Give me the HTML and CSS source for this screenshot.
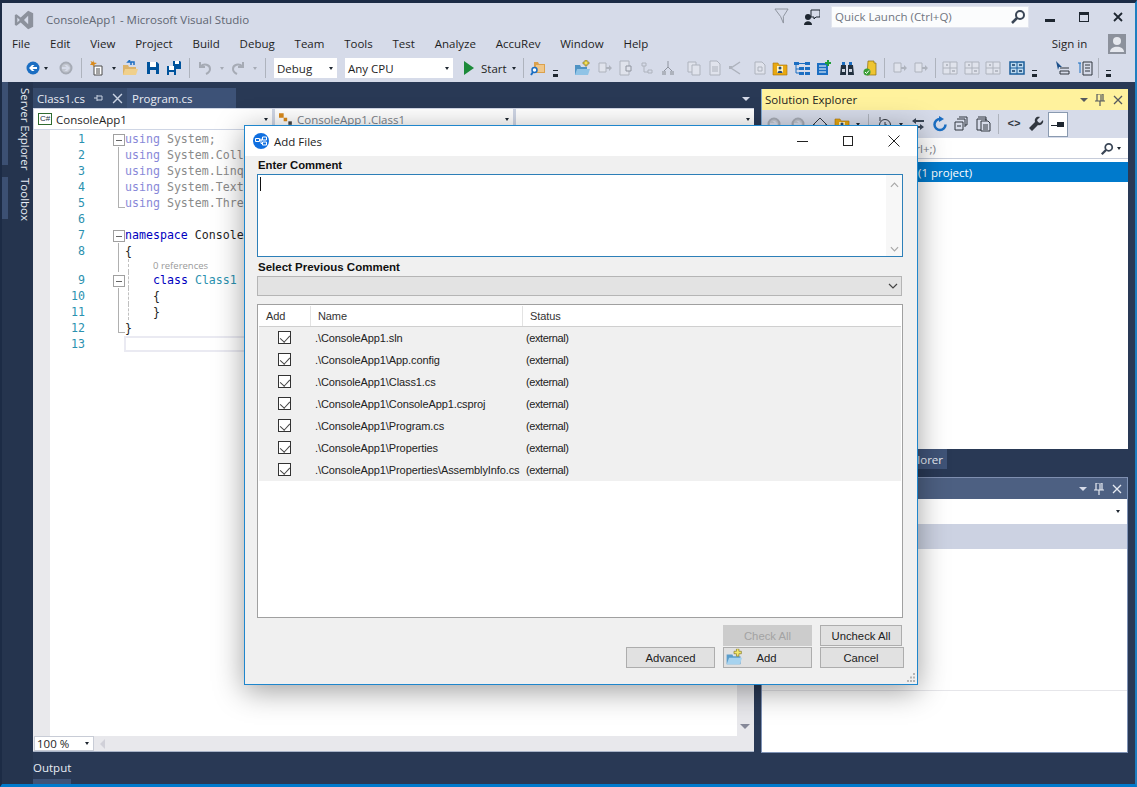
FILE: index.html
```html
<!DOCTYPE html>
<html lang="en">
<head>
<meta charset="utf-8">
<title>ConsoleApp1 - Microsoft Visual Studio</title>
<link rel="stylesheet" href="styles.css">
</head>
<body>
<svg class="sprite" aria-hidden="true">
  <symbol id="back" viewBox="0 0 16 16"><circle cx="8" cy="8" r="6.5" fill="#1b6ec2"/><path d="M12 7H7.500l2-2H7L4 8l3 3h2.500l-2-2H12z" fill="#fff"/></symbol>
  <symbol id="fwd" viewBox="0 0 16 16"><circle cx="8" cy="8" r="5.500" fill="#c2c6cf" stroke="#a6abb5" stroke-width="2"/><path d="M4 7h4.500l-2-2H9l3 3-3 3H6.500l2-2H4z" fill="#d6dbe9"/></symbol>
  <symbol id="new" viewBox="0 0 16 16"><path d="M5 6h8v9H5z" fill="#fff" stroke="#4a4a4a"/><path d="M7 9h4M7 11h4M7 13h4" stroke="#4a4a4a"/><path d="M4 0l1 2.500L8 3 5.500 4.500 5 7 3.500 5 1 5l1.500-2L1.500 1 4 2z" fill="#d98a1c"/></symbol>
  <symbol id="open" viewBox="0 0 16 16"><path d="M1 5h5l1 2h7v8H1z" fill="#dcb36a"/><path d="M1 15l2-6h13l-2 6z" fill="#f0d08c"/><path d="M9 5V2H6l2-2M9 2h3v3" fill="none" stroke="#1b6ec2" stroke-width="1.500"/></symbol>
  <symbol id="save" viewBox="0 0 16 16"><path d="M2 2h10l2 2v10H2z" fill="#00539c"/><path d="M5 2h6v5H5z" fill="#fff"/><path d="M5 10h6v4H5z" fill="#d6dbe9"/></symbol>
  <symbol id="saveall" viewBox="0 0 16 16"><path d="M7 1h7l1 1v7H7z" fill="#00539c"/><path d="M9 1h4v3H9z" fill="#fff"/><path d="M1 6h8l1 1v8H1z" fill="#00539c"/><path d="M3 6h5v4H3z" fill="#fff"/><path d="M3 12h5v3H3z" fill="#d6dbe9"/></symbol>
  <symbol id="undo" viewBox="0 0 16 16"><path d="M3 2v5h5M3.500 6.500C7 3 13 4.500 13 9c0 2.500-2 4-4 5" fill="none" stroke="#a6abb5" stroke-width="2"/></symbol>
  <symbol id="redo" viewBox="0 0 16 16"><path d="M13 2v5H8M12.500 6.500C9 3 3 4.500 3 9c0 2.500 2 4 4 5" fill="none" stroke="#a6abb5" stroke-width="2"/></symbol>
  <symbol id="find" viewBox="0 0 16 16"><path d="M4 2h4l1 2h6v9H4z" fill="#dba14d"/><path d="M6 5h8v7H6z" fill="#f0c78a"/><circle cx="4.500" cy="10" r="2.500" fill="#fff" stroke="#1b6ec2" stroke-width="1.500"/><path d="M3 12l-2 3" stroke="#1b6ec2" stroke-width="2"/></symbol>
  <symbol id="folderplus" viewBox="0 0 16 16"><path d="M1 5h5l1 2h6v8H1z" fill="#4f93c4"/><path d="M1 15l2-6h13l-2 6z" fill="#8fc3e6"/><path d="M11 0h2v2h2v2h-2v2h-2V4H9V2h2z" fill="#f5e25b" stroke="#7a6a10" stroke-width=".6"/></symbol>
  <symbol id="gdoc" viewBox="0 0 16 16"><path d="M3 2h7l3 3v9H3z" fill="#e0e3ec" stroke="#aeb3bd"/><path d="M6 7h4v4H6z" fill="none" stroke="#aeb3bd"/></symbol>
  <symbol id="gmove" viewBox="0 0 16 16"><path d="M2 3h7v9H2z" fill="#e0e3ec" stroke="#aeb3bd"/><path d="M9 7h3V5l3 3-3 3V9H9z" fill="#aeb3bd"/></symbol>
  <symbol id="gtree" viewBox="0 0 16 16"><path d="M3 3h4v3H3zM9 10h4v3H9zM5 6v6h4" fill="none" stroke="#aeb3bd"/></symbol>
  <symbol id="gmerge" viewBox="0 0 16 16"><path d="M2 11h4v4H2zM10 11h4v4h-4z" fill="#aeb3bd"/><path d="M8 1v7M4 11l4-4 4 4" fill="none" stroke="#8f949f"/></symbol>
  <symbol id="gcopy" viewBox="0 0 16 16"><path d="M2 2h8v10H2z" fill="#e0e3ec" stroke="#aeb3bd"/><path d="M6 5h8v10H6z" fill="#e0e3ec" stroke="#aeb3bd"/></symbol>
  <symbol id="gpage" viewBox="0 0 16 16"><path d="M3 1h7l3 3v11H3z" fill="#e0e3ec" stroke="#aeb3bd"/><path d="M5 7h6M5 9h6M5 11h6" stroke="#aeb3bd"/></symbol>
  <symbol id="gshare" viewBox="0 0 16 16"><path d="M13 2L4 8l9 6" fill="none" stroke="#aeb3bd" stroke-width="1.500"/><path d="M2 6h3v3H2z" fill="#aeb3bd"/></symbol>
  <symbol id="gin" viewBox="0 0 16 16"><path d="M2 1h9v14H2z" fill="#e0e3ec" stroke="#aeb3bd"/><path d="M8 6h5v5H8z" fill="#e0e3ec" stroke="#8f949f"/></symbol>
  <symbol id="person" viewBox="0 0 16 16"><path d="M1 3h5l1 2h8v10H1z" fill="#e8a812" stroke="#a87408" stroke-width=".6"/><path d="M5 6h6v7H5z" fill="#fff3c0"/><circle cx="8" cy="8" r="1.500" fill="#264a7a"/><path d="M5.500 13c0-3 5-3 5 0z" fill="#264a7a"/></symbol>
  <symbol id="tree" viewBox="0 0 16 16"><path d="M0 2h5v3H0zM5 7h5v3H5zM5 12h5v3H5zM11 2h5v3h-5zM11 7h5v3h-5zM11 12h5v3h-5z" fill="#1b6ec2"/><path d="M2 5v4h3M2 9v4h3M5 3.500h6" stroke="#1b6ec2" fill="none"/></symbol>
  <symbol id="noteplus" viewBox="0 0 16 16"><path d="M1 3h11v12H1z" fill="#1b6ec2"/><path d="M3 6h7M3 9h7M3 12h7" stroke="#fff"/><path d="M11 0h2v2h2v2h-2v2h-2V4H9V2h2z" fill="#1f9e3a"/></symbol>
  <symbol id="binoc" viewBox="0 0 16 16"><path d="M2 5h5v10H1zM9 5h5l1 10H9z" fill="#22303f"/><path d="M3 2h3v3H3zM10 2h3v3h-3z" fill="#1b6ec2"/><path d="M3 9h3v3H3zM10 9h3v3h-3z" fill="#cfd6e2"/></symbol>
  <symbol id="ydoc" viewBox="0 0 16 16"><path d="M6 1h6v2h2v12H5z" fill="#efc531" stroke="#8a6f12" stroke-width=".7"/><circle cx="5" cy="12" r="3.500" fill="#3a9e36"/><path d="M3 12l1.500 1.500L7 10.500" stroke="#fff" fill="none"/></symbol>
  <symbol id="gtable" viewBox="0 0 16 16"><path d="M1 2h14v12H1z" fill="#e0e3ec" stroke="#aeb3bd"/><path d="M8 2v12M1 8h14" stroke="#aeb3bd"/><path d="M4 5h2M10 11h3" stroke="#8f949f"/></symbol>
  <symbol id="btable" viewBox="0 0 16 16"><path d="M1 2h14v12H1z" fill="#bcd8ee" stroke="#1b5f9c" stroke-width="1.500"/><path d="M8 2v12M1 8h14" stroke="#1b5f9c"/><path d="M3 5h3M10 11h3M10 5h3M3 11h3" stroke="#123b66" stroke-width="1.500"/></symbol>
  <symbol id="cursor" viewBox="0 0 16 16"><path d="M2 1l6 6H5l-1 3z" fill="#1b4f8a"/><path d="M6 8h9M6 11h9v3H6z" fill="none" stroke="#30363f"/></symbol>
  <symbol id="lines" viewBox="0 0 16 16"><path d="M6 2h9v13H6z" fill="none" stroke="#30363f"/><path d="M8 5h5M8 8h5M8 11h5" stroke="#30363f"/><path d="M3 3v10M1 3h3" stroke="#1b6ec2"/></symbol>
  <symbol id="home" viewBox="0 0 16 16"><path d="M8 2L1 9h2v6h10V9h2z" fill="#d6dbe9" stroke="#30363f"/></symbol>
  <symbol id="clock" viewBox="0 0 16 16"><circle cx="8" cy="9" r="5.500" fill="none" stroke="#30363f"/><path d="M8 6v3h2M3 1v4" stroke="#30363f" fill="none"/></symbol>
  <symbol id="sync" viewBox="0 0 16 16"><path d="M6 2L2 5l4 3V6h8V4H6zM10 8l4 3-4 3v-2H2v-2h8z" fill="#3a4656"/></symbol>
  <symbol id="refresh" viewBox="0 0 16 16"><path d="M8 3a5.500 5.500 0 1 0 5.500 5.500" fill="none" stroke="#1b6ec2" stroke-width="2.500"/><path d="M7 0l5 3-5 3z" fill="#1b6ec2"/></symbol>
  <symbol id="collapse" viewBox="0 0 16 16"><path d="M6 1h8v8h-2M4 3h8v8M2 6h8v8H2z" fill="#d6dbe9" stroke="#30363f"/><path d="M4 10h4" stroke="#30363f"/></symbol>
  <symbol id="copies" viewBox="0 0 16 16"><path d="M3 1h8v3M2 3h9v11H2z" fill="none" stroke="#30363f"/><path d="M6 5h7l2 2v8H6z" fill="#d6dbe9" stroke="#30363f"/><path d="M8 9h5M8 11h5M8 13h5" stroke="#30363f"/></symbol>
  <symbol id="wrench" viewBox="0 0 16 16"><path d="M15 4l-3 3-2-1-1-2 3-3c-3-1-6 1-5 5L1 12l3 3 6-6c3 1 6-2 5-5z" fill="#30363f"/></symbol>
  <symbol id="pin-h" viewBox="0 0 16 16"><path d="M1 9h6V6h7v5H7v-1H1z" fill="#1e2630"/></symbol>
  <symbol id="mag" viewBox="0 0 16 16"><circle cx="10" cy="6" r="4" fill="none" stroke="#3a4656" stroke-width="2"/><path d="M7 9l-5 5" stroke="#3a4656" stroke-width="2.500"/></symbol>
  <symbol id="addfolder" viewBox="0 0 22 20"><path d="M2 7h7l1 2h9v10H2z" fill="#5a9dcb"/><path d="M2 19l3-8h16l-3 8z" fill="#a7d3ef"/><path d="M14 0h3v3h3v3h-3v3h-3V6h-3V3h3z" fill="#f4e76a" stroke="#6e6414" stroke-width=".7"/></symbol>
</svg>

<div class="vs">
  <header class="chrome">
    <div class="titlebar">
      <svg class="logo" viewBox="0 0 24 24"><path fill="#8c919c" d="M17 1l6 3v16l-6 3-9-8-5 4-2-1V6l2-1 5 4zM4 9v6l3-3zm13-2l-5 5 5 5z"/></svg>
      <span class="apptitle">ConsoleApp1 - Microsoft Visual Studio</span>
      <div class="title-right">
        <svg class="ti-filter" viewBox="0 0 16 18"><path d="M1 1h14L10 9v7L7 9z" fill="none" stroke="#8c919c"/></svg>
        <svg class="ti-feedback" viewBox="0 0 16 16"><path d="M7 1h9v7h-4l-2 2V8H7z" fill="none" stroke="#1e2630"/><circle cx="4" cy="8" r="3" fill="#1e2630"/><path d="M0 16c0-5 8-5 8 0z" fill="#1e2630"/></svg>
        <div class="quick"><span>Quick Launch (Ctrl+Q)</span><svg class="i16"><use href="#mag"/></svg></div>
        <div class="winctl">
          <span class="wc"><i class="wc-min"></i></span>
          <span class="wc"><i class="wc-max"></i></span>
          <span class="wc"><svg class="wc-close" viewBox="0 0 10 10"><path d="M1 1l8 8M9 1l-8 8" stroke="#1e2630" stroke-width="1.800"/></svg></span>
        </div>
      </div>
    </div>
    <nav class="menubar">
      <span>File</span><span>Edit</span><span>View</span><span>Project</span><span>Build</span><span>Debug</span><span>Team</span><span>Tools</span><span>Test</span><span>Analyze</span><span>AccuRev</span><span>Window</span><span>Help</span>
      <span class="signin">Sign in</span>
      <svg class="avatar" viewBox="0 0 18 20"><path d="M0 0h18v20H0z" fill="#8c919c"/><circle cx="9" cy="7" r="4" fill="#e6e8ee"/><path d="M2 18c0-7 14-7 14 0z" fill="#e6e8ee"/></svg>
    </nav>
    <div class="toolbar">
      <i class="grip"></i>
      <svg class="i16 g7"><use href="#back"/></svg><i class="arr g3"></i>
      <svg class="i16 g10"><use href="#fwd"/></svg><i class="sep g7"></i>
      <svg class="i16 g7"><use href="#new"/></svg><i class="arr g7"></i>
      <svg class="i16 g6"><use href="#open"/></svg>
      <svg class="i16 g7"><use href="#save"/></svg>
      <svg class="i16 g5"><use href="#saveall"/></svg><i class="sep g7"></i>
      <svg class="i16 g7"><use href="#undo"/></svg><i class="arr dim g7"></i>
      <svg class="i16 g6"><use href="#redo"/></svg><i class="arr dim g7"></i><i class="sep g8"></i>
      <div class="tcombo w63 g8"><span>Debug</span><i class="arr"></i></div>
      <div class="tcombo w108 g8"><span>Any CPU</span><i class="arr"></i></div>
      <svg class="play g10" viewBox="0 0 12 14"><path d="M1 0l10 7-10 7z" fill="#1c8a3a"/></svg>
      <span class="start g6">Start</span><i class="arr g7"></i><i class="sep g7"></i>
      <svg class="i16 g6"><use href="#find"/></svg><i class="over g7"></i>
      <i class="grip g6"></i>
      <svg class="i16 g5"><use href="#folderplus"/></svg>
      <svg class="i16 g7"><use href="#gmove"/></svg>
      <svg class="i16 g5"><use href="#gin"/></svg>
      <svg class="i16 g5"><use href="#gtree"/></svg>
      <svg class="i16 g5"><use href="#gmerge"/></svg>
      <svg class="i16 g10"><use href="#gcopy"/></svg>
      <svg class="i16 g5"><use href="#gpage"/></svg>
      <svg class="i16 g4"><use href="#gshare"/></svg>
      <svg class="i16 g9"><use href="#gdoc"/></svg>
      <svg class="i16 g4"><use href="#person"/></svg>
      <svg class="i16 g6"><use href="#tree"/></svg>
      <svg class="i16 g6"><use href="#noteplus"/></svg>
      <svg class="i16 g7"><use href="#binoc"/></svg>
      <svg class="i16 g7"><use href="#ydoc"/></svg><i class="sep g6"></i>
      <svg class="i16 g7"><use href="#gmove"/></svg>
      <svg class="i16 g5"><use href="#gmove"/></svg><i class="sep g6"></i>
      <svg class="i16 g6"><use href="#gtable"/></svg>
      <svg class="i16 g6"><use href="#gtable"/></svg>
      <svg class="i16 g5"><use href="#gtable"/></svg>
      <svg class="i16 g8"><use href="#btable"/></svg><i class="over g7"></i>
      <i class="grip g5"></i>
      <svg class="i16 g7"><use href="#cursor"/></svg>
      <svg class="i16 g7"><use href="#lines"/></svg><i class="sep g5"></i>
      <i class="over g7"></i>
    </div>
  </header>

  <main class="workspace">
    <aside class="rail">
      <div class="railtab rt-server"><span>Server Explorer</span></div>
      <div class="railtab rt-toolbox"><span>Toolbox</span></div>
    </aside>

    <section class="doc">
      <div class="tabs">
        <div class="tab tab-active">Class1.cs<svg class="tabpin" viewBox="0 0 10 10"><path d="M0 5h3M3 2v6M3 3h5v4H3" fill="none" stroke="#c9d2e2"/></svg><svg class="tabx" viewBox="0 0 10 10"><path d="M1 1l8 8M9 1l-8 8" stroke="#c9d2e2" stroke-width="1.300"/></svg></div>
        <div class="tab tab-other">Program.cs</div>
        <i class="tabmenu"></i>
      </div>
      <div class="navbar">
        <div class="navc nc1"><span class="csbadge">C#</span><span>ConsoleApp1</span><i class="arr"></i></div>
        <div class="navc nc2"><svg class="i14" viewBox="0 0 12 12"><path d="M0 1h4v4H0zM4 5h3v3H4z" fill="#d98a1c"/><path d="M8 8h3v3H8z" fill="#444"/></svg><span class="dimtxt">ConsoleApp1.Class1</span><i class="arr"></i></div>
        <div class="navc nc3"><i class="arr"></i></div>
      </div>
      <div class="editor">
        <div class="margin"></div>
        <div class="code">
          <div class="row"><span class="ln">1</span><span class="fold box"></span><span class="src"><b class="faded">using</b> <u>System;</u></span></div>
          <div class="row"><span class="ln">2</span><span class="fold line"></span><span class="src"><b class="faded">using</b> <u>System.Collections.Generic;</u></span></div>
          <div class="row"><span class="ln">3</span><span class="fold line"></span><span class="src"><b class="faded">using</b> <u>System.Linq;</u></span></div>
          <div class="row"><span class="ln">4</span><span class="fold line"></span><span class="src"><b class="faded">using</b> <u>System.Text;</u></span></div>
          <div class="row"><span class="ln">5</span><span class="fold end"></span><span class="src"><b class="faded">using</b> <u>System.Threading.Tasks;</u></span></div>
          <div class="row"><span class="ln">6</span><span class="fold"></span><span class="src"></span></div>
          <div class="row"><span class="ln">7</span><span class="fold box"></span><span class="src"><b class="kw">namespace</b> ConsoleApp1</span></div>
          <div class="row"><span class="ln">8</span><span class="fold line"></span><span class="src">{</span></div>
          <div class="row rowrefs"><span class="ln"></span><span class="fold line"></span><span class="src"><i class="guide"></i><span class="refs">0 references</span></span></div>
          <div class="row"><span class="ln">9</span><span class="fold box"></span><span class="src"><i class="guide"></i><b class="kw">class</b> <em>Class1</em></span></div>
          <div class="row"><span class="ln">10</span><span class="fold line"></span><span class="src"><i class="guide"></i>{</span></div>
          <div class="row"><span class="ln">11</span><span class="fold line"></span><span class="src"><i class="guide"></i>}</span></div>
          <div class="row"><span class="ln">12</span><span class="fold end"></span><span class="src">}</span></div>
          <div class="row"><span class="ln">13</span><span class="fold"></span><span class="src current"></span></div>
        </div>
        <div class="vscroll"><i class="vdown"></i></div>
      </div>
      <div class="hbar">
        <div class="zoomc"><span>100 %</span><i class="arr"></i></div>
        <i class="hleft"></i>
      </div>
      <div class="output"><span>Output</span></div>
    </section>

    <section class="tools">
      <div class="panel panel-se">
        <div class="ptitle ptitle-on">
          <span>Solution Explorer</span>
          <i class="tabmenu dark"></i>
          <svg class="ppin" viewBox="0 0 10 12"><path d="M2 0h6v7H2zM0 7h10M5 7v5M6 1v6" fill="none" stroke="#55595f" stroke-width="1.200"/></svg>
          <svg class="px" viewBox="0 0 10 10"><path d="M1 1l8 8M9 1l-8 8" stroke="#55595f" stroke-width="1.300"/></svg>
        </div>
        <div class="setool">
          <svg class="i16 s4"><use href="#fwd"/></svg>
          <svg class="i16 s8"><use href="#fwd"/></svg>
          <svg class="i16 s6"><use href="#home"/></svg>
          <svg class="i16 s6"><use href="#person"/></svg><i class="arr s6"></i><i class="sep s8"></i>
          <svg class="i16 s8"><use href="#clock"/></svg><i class="arr s6"></i>
          <svg class="i16 s7"><use href="#sync"/></svg>
          <svg class="i16 s6"><use href="#refresh"/></svg>
          <svg class="i16 s5"><use href="#collapse"/></svg>
          <svg class="i16 s6"><use href="#copies"/></svg><i class="sep s7"></i>
          <span class="codeicon s7">&lt;&gt;</span>
          <svg class="i16 s6"><use href="#wrench"/></svg>
          <span class="pinbtn s4"><svg class="i16"><use href="#pin-h"/></svg></span>
        </div>
        <div class="sesearch"><span>Search Solution Explorer (Ctrl+;)</span><svg class="i14"><use href="#mag"/></svg><i class="arr"></i></div>
        <div class="serow"><span>Solution 'ConsoleApp1' (1 project)</span></div>
      </div>
      <div class="ptabs"><div class="ptab">Solution Explorer</div></div>
      <div class="panel panel-props">
        <div class="ptitle ptitle-off">
          <span>Properties</span>
          <i class="tabmenu"></i>
          <svg class="ppin" viewBox="0 0 10 12"><path d="M2 0h6v7H2zM0 7h10M5 7v5M6 1v6" fill="none" stroke="#e6eaf2" stroke-width="1.200"/></svg>
          <svg class="px" viewBox="0 0 10 10"><path d="M1 1l8 8M9 1l-8 8" stroke="#e6eaf2" stroke-width="1.300"/></svg>
        </div>
        <div class="propcombo"><i class="arr"></i></div>
        <div class="propsel"></div>
        <div class="propgrid"></div>
        <div class="propdesc"></div>
      </div>
    </section>
  </main>
</div>

<div class="dialog">
  <div class="dtitle">
    <svg class="dicon" viewBox="0 0 16 16"><circle cx="8" cy="8" r="8" fill="#0f6fe0"/><path d="M2.500 5.500h4v3h-4zM9.500 4h4v3h-4zM9.500 9h4v3h-4zM6.500 7h3M8 5.500v5h1.500" fill="none" stroke="#fff"/></svg>
    <span>Add Files</span>
    <div class="dctl">
      <span class="dc"><i class="dmin"></i></span>
      <span class="dc"><i class="dmax"></i></span>
      <span class="dc"><svg class="dclose" viewBox="0 0 12 12"><path d="M.5.500l11 11M11.500.500l-11 11" stroke="#222"/></svg></span>
    </div>
  </div>
  <div class="dbody">
    <label class="dlabel">Enter Comment</label>
    <div class="textarea">
      <i class="caret"></i>
      <div class="tascroll"><svg class="chev" viewBox="0 0 10 6"><path d="M1 5l4-4 4 4" fill="none" stroke="#a8a8a8" stroke-width="1.300"/></svg><svg class="chev" viewBox="0 0 10 6"><path d="M1 1l4 4 4-4" fill="none" stroke="#a8a8a8" stroke-width="1.300"/></svg></div>
    </div>
    <label class="dlabel dl2">Select Previous Comment</label>
    <div class="dcombo"><svg class="chevd" viewBox="0 0 10 6"><path d="M1 1l4 4 4-4" fill="none" stroke="#444" stroke-width="1.200"/></svg></div>
    <div class="list">
      <div class="lhead"><span class="c1">Add</span><span class="c2">Name</span><span class="c3">Status</span></div>
      <div class="lrow"><span class="c1"><i class="check"></i></span><span class="c2">.\ConsoleApp1.sln</span><span class="c3">(external)</span></div>
      <div class="lrow"><span class="c1"><i class="check"></i></span><span class="c2">.\ConsoleApp1\App.config</span><span class="c3">(external)</span></div>
      <div class="lrow"><span class="c1"><i class="check"></i></span><span class="c2">.\ConsoleApp1\Class1.cs</span><span class="c3">(external)</span></div>
      <div class="lrow"><span class="c1"><i class="check"></i></span><span class="c2">.\ConsoleApp1\ConsoleApp1.csproj</span><span class="c3">(external)</span></div>
      <div class="lrow"><span class="c1"><i class="check"></i></span><span class="c2">.\ConsoleApp1\Program.cs</span><span class="c3">(external)</span></div>
      <div class="lrow"><span class="c1"><i class="check"></i></span><span class="c2">.\ConsoleApp1\Properties</span><span class="c3">(external)</span></div>
      <div class="lrow"><span class="c1"><i class="check"></i></span><span class="c2">.\ConsoleApp1\Properties\AssemblyInfo.cs</span><span class="c3">(external)</span></div>
    </div>
    <div class="dbuttons">
      <button class="btn bt-check" disabled>Check All</button>
      <button class="btn bt-uncheck">Uncheck All</button>
      <button class="btn bt-adv">Advanced</button>
      <button class="btn bt-add"><svg class="addic" viewBox="0 0 22 20"><use href="#addfolder"/></svg>Add</button>
      <button class="btn bt-cancel">Cancel</button>
    </div>
  </div>
  <svg class="sizegrip" viewBox="0 0 10 10"><path d="M7 0h2v2H7zM4 3.500h2v2H4zM7 3.500h2v2H7zM1 7h2v2H1zM4 7h2v2H4zM7 7h2v2H7z" fill="#b5b5b5"/></svg>
</div>
</body>
</html>
```
FILE: styles.css
```css
* { box-sizing: border-box; }
html, body { margin: 0; height: 100%; overflow: hidden; }
body { width: 1137px; height: 787px; background: #293955; font: 12px "Open Sans", "Noto Sans", sans-serif; color: #1e1e1e; }
i { font-style: normal; display: block; flex: none; }
.sprite { position: absolute; width: 0; height: 0; }

.vs { width: 1137px; height: 787px; display: flex; flex-direction: column; border-top: 3px solid #1c2b45; border-left: 2px solid #1c2b45; border-right: 2px solid #1e7fc0; border-bottom: 3px solid #007acc; background: #293955; }
.chrome { background: #d6dbe9; height: 79px; flex: none; }

.titlebar { height: 27px; display: flex; align-items: center; }
.logo { width: 20px; height: 20px; margin: 6px 0 0 12px; }
.apptitle { margin: 6px 0 0 12px; font-size: 11.500px; color: #606672; }
.title-right { margin-left: auto; display: flex; align-items: center; }
.ti-filter { width: 15px; height: 17px; }
.ti-feedback { width: 16px; height: 16px; margin-left: 15px; }
.quick { width: 198px; height: 22px; margin-left: 11px; background: #fbfcfd; border: 1px solid #e2e5ee; display: flex; align-items: center; justify-content: space-between; padding: 0 2px 0 3px; color: #707580; font-size: 11.500px; }
.i16 { width: 16px; height: 16px; flex: none; display: block; }
.i14 { width: 14px; height: 14px; flex: none; }
.winctl { display: flex; width: 106px; padding-left: 4px; }
.wc { width: 34px; height: 20px; display: flex; align-items: center; justify-content: center; }
.wc-min { width: 10px; height: 3px; background: #1e2630; margin-top: 7px; }
.wc-max { width: 10px; height: 10px; border: 1px solid #1e2630; border-top-width: 3px; }
.wc-close { width: 10px; height: 10px; }

.menubar { height: 26px; display: flex; align-items: center; padding-left: 10px; gap: 19.800px; font-size: 11.500px; color: #1e1e1e; }
.signin { margin-left: auto; margin-top: 1px; }
.avatar { width: 18px; height: 20px; margin: 1px 9px 0 1px; flex: none; }

.toolbar { height: 26px; display: flex; align-items: center; padding: 0 0 2px 11px; }
.grip { width: 5px; height: 18px; background: radial-gradient(circle, #8f949f 35%, transparent 40%) 0 0 / 2px 2px; }
.arr { width: 0; height: 0; border-left: 2.500px solid transparent; border-right: 2.500px solid transparent; border-top: 3px solid #1e2630; }
.arr.dim { border-top-color: #a6abb5; }
.over { width: 5px; height: 7px; border-top: 1px solid #1e2630; border-bottom: 3px solid #1e2630; margin-top: 10px; }
.sep { width: 1px; height: 20px; background: #aeb3bd; }
.g3 { margin-left: 3px; } .g4 { margin-left: 4px; } .g5 { margin-left: 5px; } .g6 { margin-left: 6px; }
.g7 { margin-left: 7px; } .g8 { margin-left: 8px; } .g9 { margin-left: 9px; } .g10 { margin-left: 10px; }
.tcombo { height: 20px; background: #fff; display: flex; align-items: center; justify-content: space-between; padding: 0 4px 0 3px; font-size: 11.500px; flex: none; }
.w63 { width: 63px; } .w108 { width: 108px; }
.play { width: 12px; height: 14px; flex: none; }
.start { width: 24px; font-size: 11.500px; flex: none; }

.workspace { flex: 1; display: flex; min-height: 0; }
.rail { width: 31px; flex: none; display: flex; flex-direction: column; background: #25344e; }
.railtab { color: #e8ecf4; font-size: 11.500px; writing-mode: vertical-rl; display: flex; align-items: flex-start; border-left: 6px solid #3c5073; padding-left: 2px; white-space: nowrap; }
.rt-server { height: 83px; padding-top: 6px; }
.rt-toolbox { height: 42px; margin-top: 12px; padding-top: 1px; }

.doc { width: 721px; flex: none; display: flex; flex-direction: column; padding-top: 6px; }
.tabs { height: 20px; display: flex; align-items: flex-start; color: #e8ecf4; flex: none; position: relative; }
.tab { height: 20px; display: flex; align-items: center; font-size: 11.500px; padding-left: 4px; }
.tab-active { width: 94px; background: #364a6b; }
.tab-other { width: 109px; background: #3d5277; padding-left: 5px; }
.tabpin { width: 10px; height: 10px; margin-left: 9px; }
.tabx { width: 11px; height: 11px; margin-left: 8px; }
.tabmenu { width: 0; height: 0; border-left: 4px solid transparent; border-right: 4px solid transparent; border-top: 4px solid #d6dbe9; }
.tabs .tabmenu { position: absolute; right: 4px; top: 9px; }
.tabmenu.dark { border-top-color: #55595f; }

.navbar { height: 22px; display: flex; gap: 3px; padding: 1px 0 0 1px; background: #cfd6e5; flex: none; }
.navc { background: #fff; display: flex; align-items: center; height: 20px; padding: 0 4px; font-size: 11.500px; gap: 4px; }
.navc .arr { margin-left: auto; }
.nc1 { width: 238px; } .nc2 { width: 238px; } .nc3 { width: 238px; }
.csbadge { width: 14px; height: 12px; border: 1px solid #2f6b2f; font-size: 8px; line-height: 10px; text-align: center; font-family: "Liberation Sans", sans-serif; color: #234; }
.dimtxt { color: #7b7f88; }

.editor { flex: 1; display: flex; background: #fff; min-height: 0; }
.margin { width: 17px; background: #e9e9ec; flex: none; }
.code { flex: 1; padding-top: 1px; font: 11.600px/16px "DejaVu Sans Mono", monospace; color: #1e1e1e; }
.row { height: 16px; display: flex; }
.rowrefs { height: 13px; }
.ln { width: 35px; text-align: right; color: #2b91af; flex: none; }
.fold { width: 11px; margin-left: 28px; margin-right: 1px; flex: none; position: relative; }
.box::before { content: ""; position: absolute; left: 0; top: 3px; width: 10px; height: 10px; border: 1px solid #a0a0a0; background: linear-gradient(#666, #666) center / 6px 1px no-repeat #fff; }
.line::before { content: ""; position: absolute; left: 5px; top: 0; bottom: 0; border-left: 1px solid #b0b0b0; }
.end::before { content: ""; position: absolute; left: 5px; top: 0; height: 12px; width: 6px; border-left: 1px solid #b0b0b0; border-bottom: 1px solid #b0b0b0; }
.src { flex: 1; white-space: pre; display: flex; }
.src b { font-weight: normal; }
.src u { text-decoration: none; color: #8a8a8a; }
.src em { font-style: normal; color: #2b91af; }
.faded { color: #8888d8; }
.kw { color: #0000c0; }
.src b + u, .src b + em { margin-left: 7px; }
.guide { width: 25px; margin-left: 3px; height: 16px; border-left: 1px dashed #c0c0c0; }
.rowrefs .guide { height: 13px; }
.refs { font: 9.500px/13px "Open Sans", sans-serif; color: #9a9a9a; }
.current { border: 2px solid #eaeaf2; height: 16px; margin-left: -1px; }
.vscroll { width: 17px; background: #e8e8ec; flex: none; position: relative; }
.vdown { position: absolute; left: 3px; bottom: 7px; width: 0; height: 0; border-left: 5px solid transparent; border-right: 5px solid transparent; border-top: 5px solid #868999; }

.hbar { height: 16px; background: #e8e8ec; display: flex; align-items: center; flex: none; border-bottom: 1px solid #a9b4c8; }
.zoomc { width: 60px; height: 15px; margin-left: 1px; background: #fff; border: 1px solid #c8ccd6; display: flex; align-items: center; justify-content: space-between; padding: 0 4px 0 2px; font-size: 11.500px; }
.hleft { margin-left: 6px; width: 0; height: 0; border-top: 5px solid transparent; border-bottom: 5px solid transparent; border-right: 5px solid #d0d0d8; }
.output { height: 32px; color: #e8ecf4; font-size: 11.500px; flex: none; padding-top: 8px; }
.output span { display: inline-block; height: 24px; border-bottom: 5px solid #3f5377; width: 38px; }

.tools { width: 367px; flex: none; margin-left: 7px; display: flex; flex-direction: column; padding-top: 7px; }
.panel { background: #fff; }
.panel-se { height: 360px; flex: none; border-left: 1px solid #7fa8d0; }
.ptitle { height: 21px; display: flex; align-items: center; padding: 0 5px 0 3px; font-size: 11.500px; }
.ptitle > span { margin-right: auto; }
.ptitle .tabmenu { margin-right: 7px; }
.ptitle-on { background: #fff29d; color: #1e1e1e; }
.ptitle-off { background: #4d6082; color: #e8ecf4; height: 22px; border-top: 1px solid #7f8fb0; }
.ppin { width: 10px; height: 12px; margin-right: 8px; }
.px { width: 10px; height: 10px; }
.setool { height: 28px; background: #d6dbe9; display: flex; align-items: center; }
.s4 { margin-left: 4px; } .s5 { margin-left: 5px; } .s6 { margin-left: 6px; } .s7 { margin-left: 7px; } .s8 { margin-left: 8px; }
.codeicon { width: 16px; font: bold 11px "Liberation Mono", monospace; color: #30363f; text-align: center; }
.pinbtn { width: 20px; height: 25px; background: #fff; border: 1px solid #8a9ab0; display: flex; align-items: center; justify-content: center; }
.sesearch { height: 20px; margin: 1px 0 0; background: #fff; display: flex; align-items: center; justify-content: flex-end; padding: 0 7px 0 6px; color: #7b7f88; font-size: 11.500px; gap: 3px; border-bottom: 1px solid #c6ccda; }
.sesearch span { flex: none; white-space: nowrap; }
.sesearch .i14 { margin-left: 161px; }
.serow { margin-top: 3px; height: 20px; background: #007acc; color: #fff; font-size: 11.500px; display: flex; align-items: center; padding-left: 30px; }

.ptabs { height: 28px; flex: none; display: flex; }
.ptab { height: 20px; width: 186px; background: #3f5377; color: #e8ecf4; font-size: 11.500px; display: flex; align-items: center; justify-content: flex-end; padding-right: 4px; }

.panel-props { height: 276px; flex: none; border: 1px solid #7f93b6; border-top: 0; }
.propcombo { height: 25px; display: flex; align-items: center; justify-content: flex-end; padding-right: 7px; }
.propsel { height: 25px; background: #ccd2e2; }
.propgrid { height: 142px; border-bottom: 1px solid #e6e6ea; }

.dialog { position: absolute; left: 244px; top: 125px; width: 674px; height: 560px; border: 1px solid #1f86cc; background: #f0f0f0; box-shadow: 0 6px 28px rgba(0, 0, 0, .38); font: 11px "Liberation Sans", Arial, sans-serif; letter-spacing: -.1px; color: #222; display: flex; flex-direction: column; }
.dtitle { height: 30px; background: #fff; display: flex; align-items: center; padding-left: 8px; flex: none; font: 11.500px "Open Sans", sans-serif; letter-spacing: 0; }
.dicon { width: 16px; height: 16px; margin-right: 5px; }
.dctl { margin-left: auto; display: flex; }
.dc { width: 46px; height: 30px; display: flex; align-items: center; justify-content: center; }
.dmin { width: 11px; height: 1px; background: #222; }
.dmax { width: 10px; height: 10px; border: 1px solid #222; }
.dclose { width: 12px; height: 12px; }
.dbody { flex: 1; padding: 0 14px 0 12px; display: flex; flex-direction: column; position: relative; }
.dlabel { height: 18px; padding: 2px 0 0 1px; font: bold 11.300px/14px "Liberation Sans", Arial, sans-serif; letter-spacing: 0; color: #111; flex: none; }
.dl2 { height: 19px; padding-top: 3px; font-size: 11.500px; }
.textarea { height: 83px; background: #fff; border: 1px solid #2d7fb8; display: flex; justify-content: space-between; flex: none; }
.caret { width: 1px; height: 14px; background: #111; margin: 2px 0 0 2px; }
.tascroll { width: 16px; background: #f7f7f7; display: flex; flex-direction: column; justify-content: space-between; align-items: center; padding: 7px 0 4px; }
.chev { width: 9px; height: 6px; display: block; }
.dcombo { height: 20px; background: #e3e3e3; border: 1px solid #b5b5b5; display: flex; align-items: center; justify-content: flex-end; padding-right: 3px; flex: none; margin-right: 1px; }
.chevd { width: 10px; height: 6px; }
.list { margin-top: 8px; height: 314px; background: #fff; border: 1px solid #a0a0a0; padding: 1px; flex: none; }
.lhead, .lrow { display: flex; }
.lhead { height: 21px; align-items: center; border-bottom: 1px solid #cfcfcf; background: #fff; color: #333; }
.lhead .c1 { border-right: 1px solid #e3e3e3; padding-left: 7px; height: 100%; display: flex; align-items: center; }
.lhead .c2 { border-right: 1px solid #e3e3e3; padding-left: 7px; height: 100%; display: flex; align-items: center; }
.lhead .c3 { padding-left: 7px; }
.c1 { width: 52px; flex: none; }
.c2 { width: 212px; flex: none; white-space: nowrap; }
.lrow { height: 22px; background: #f0f0f0; align-items: center; color: #222; }
.lrow .c1 { display: flex; justify-content: center; padding-right: 2px; }
.lrow .c2 { padding-left: 4px; }
.lrow .c3 { padding-left: 3px; letter-spacing: -.4px; }
.check { width: 13px; height: 13px; border: 1px solid #333; background: #fff; position: relative; margin-top: -1px; }
.check::after { content: ""; position: absolute; left: 3px; top: 1px; width: 5px; height: 8px; border-right: 1px solid #444; border-bottom: 1px solid #444; transform: rotate(42deg); }
.dbuttons { margin-top: 7px; display: grid; grid-template-columns: 89px 89px 84px; column-gap: 8px; row-gap: 1px; grid-template-rows: 21px 21px; justify-content: end; margin-right: -1px; }
.btn { margin: 0; padding: 0; font: 11.300px "Liberation Sans", Arial, sans-serif; color: #222; background: #e1e1e1; border: 1px solid #adadad; position: relative; }
.bt-check { grid-column: 2; background: #cccccc; color: #a3a3a3; border-color: #cccccc; }
.bt-uncheck { grid-column: 3; width: 82px; }
.bt-adv { grid-column: 1; }
.bt-add { grid-column: 2; padding-right: 2px; }
.bt-cancel { grid-column: 3; padding-right: 2px; }
.addic { position: absolute; left: 1px; top: 0; width: 18px; height: 18px; }
.sizegrip { position: absolute; right: 1px; bottom: 1px; width: 10px; height: 10px; }
```
